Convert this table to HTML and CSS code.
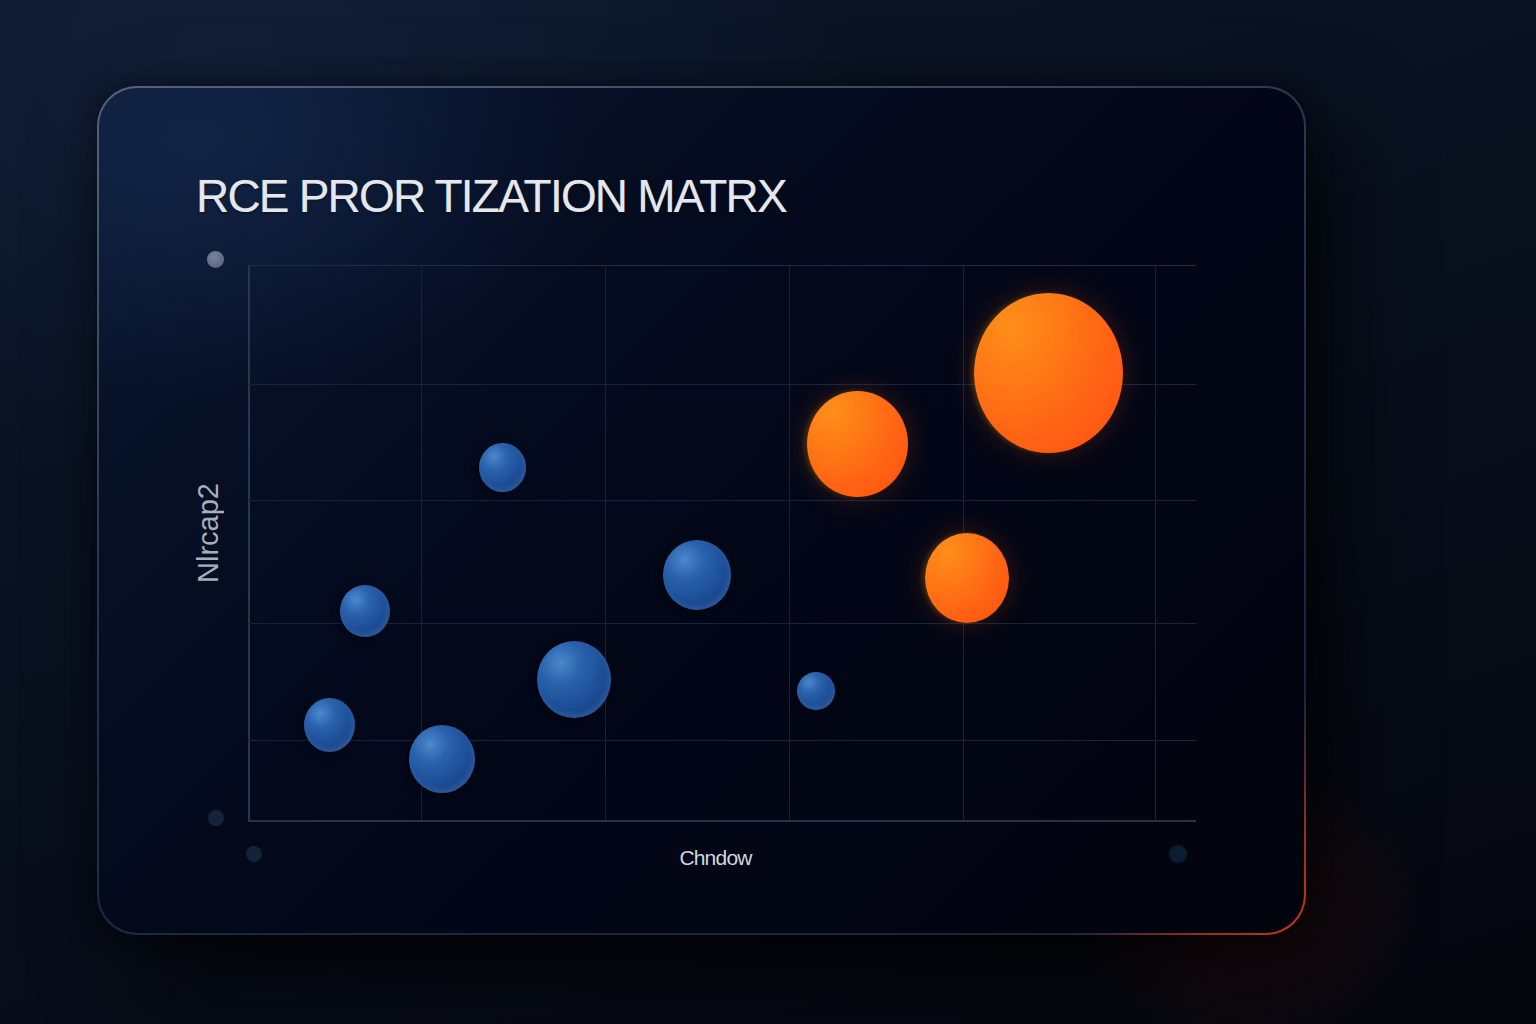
FILE: index.html
```html
<!DOCTYPE html>
<html lang="en">
<head>
<meta charset="utf-8">
<title>RCE Prioritization Matrix</title>
<link rel="stylesheet" href="styles.css">
</head>
<body>
<main class="stage">
  <section class="card">
    <h1 class="title">RCE PROR TIZATION MATRX</h1>
    <div class="chart">
      <div class="y-axis">
        <span class="dot dot-light"></span>
        <span class="y-label">Nlrcap2</span>
        <span class="dot dot-dark"></span>
      </div>
      <div class="plot">
        <svg class="grid" width="948" height="557" viewBox="0 0 948 557" aria-hidden="true">
          <g stroke="#17233a" stroke-width="1">
            <line x1="0" y1="119.5" x2="948" y2="119.5"/>
            <line x1="0" y1="235.5" x2="948" y2="235.5"/>
            <line x1="0" y1="358.5" x2="948" y2="358.5"/>
            <line x1="0" y1="475.5" x2="948" y2="475.5"/>
            <line x1="173.5" y1="0" x2="173.5" y2="555"/>
            <line x1="357.5" y1="0" x2="357.5" y2="555"/>
            <line x1="541.5" y1="0" x2="541.5" y2="555"/>
            <line x1="715.5" y1="0" x2="715.5" y2="555"/>
            <line x1="907.5" y1="0" x2="907.5" y2="555"/>
          </g>
        </svg>
        <span class="bubble blue" style="left:229px;top:177px;width:47px;height:49px"></span>
        <span class="bubble blue" style="left:413px;top:274px;width:68px;height:70px"></span>
        <span class="bubble blue" style="left:90px;top:319px;width:50px;height:52px"></span>
        <span class="bubble blue" style="left:287px;top:375px;width:74px;height:77px"></span>
        <span class="bubble blue" style="left:54px;top:432px;width:51px;height:54px"></span>
        <span class="bubble blue" style="left:159px;top:459px;width:66px;height:68px"></span>
        <span class="bubble blue" style="left:547px;top:406px;width:38px;height:38px"></span>
        <span class="bubble orange" style="left:557px;top:125px;width:101px;height:106px"></span>
        <span class="bubble orange" style="left:724px;top:27px;width:149px;height:160px"></span>
        <span class="bubble orange" style="left:675px;top:267px;width:84px;height:90px"></span>
      </div>
      <div class="corner"></div>
      <div class="x-axis">
        <span class="dot dot-dark dot-left"></span>
        <span class="x-label">Chndow</span>
        <span class="dot dot-dark dot-right"></span>
      </div>
    </div>
  </section>
</main>
</body>
</html>
```
FILE: styles.css
```css
* { box-sizing: border-box; }

html, body {
  margin: 0;
  padding: 0;
  width: 1536px;
  height: 1024px;
  overflow: hidden;
}

body {
  font-family: "Liberation Sans", Arial, sans-serif;
  background:
    radial-gradient(ellipse 900px 600px at 15% 5%, rgba(18, 32, 58, 0.8), rgba(12, 22, 40, 0) 70%),
    linear-gradient(160deg, #0c1729 0%, #08101e 45%, #04060d 100%);
}

.stage {
  padding: 86px 0 0 97px;
}

.card {
  position: relative;
  width: 1209px;
  height: 849px;
  border-radius: 40px;
  border: 2px solid transparent;
  padding: 80px 0 0 97px;
  background:
    radial-gradient(ellipse 560px 380px at 8% 6%, rgba(24, 46, 88, 0.6), rgba(20, 38, 74, 0) 70%) padding-box,
    linear-gradient(135deg, #0a1830 0%, #040b1e 35%, #020616 60%, #02040d 100%) padding-box,
    radial-gradient(circle 300px at 100% 100%, #c8341c 0%, rgba(190, 48, 28, 0.75) 35%, rgba(34, 46, 70, 0) 80%) border-box,
    linear-gradient(160deg, #56647e 0%, #2a3852 35%, #1c2840 70%, #18233a 100%) border-box;
  box-shadow: 30px 40px 90px rgba(0, 0, 0, 0.7), 0 0 24px rgba(0, 0, 0, 0.4);
}

.card::after {
  content: "";
  position: absolute;
  right: -120px;
  bottom: -120px;
  width: 360px;
  height: 300px;
  background: radial-gradient(ellipse closest-side at 50% 50%, rgba(200, 40, 20, 0.16), rgba(200, 40, 20, 0));
  pointer-events: none;
  z-index: -1;
}

.title {
  margin: 0;
  font-size: 46px;
  line-height: 56px;
  font-weight: 400;
  letter-spacing: -1.8px;
  color: #e4e8ee;
  text-shadow: 0 1px 2px rgba(0, 0, 0, 0.6), 0 0 1px rgba(255, 255, 255, 0.4);
  white-space: nowrap;
}

.chart {
  margin-top: 41px;
  margin-left: 3px;
  display: grid;
  grid-template-columns: 49px 948px;
  grid-template-rows: 557px 64px;
}

.y-axis {
  display: flex;
  flex-direction: column;
  justify-content: space-between;
  align-items: center;
  padding-right: 16px;
  margin-top: -14px;
  margin-bottom: -4px;
}

.dot {
  display: block;
  width: 17px;
  height: 17px;
  border-radius: 50%;
  flex: none;
}

.dot-light {
  background: radial-gradient(circle at 40% 35%, #75839a, #55627a);
}

.dot-dark {
  width: 16px;
  height: 16px;
  background: #152238;
}

.y-label {
  writing-mode: vertical-rl;
  transform: rotate(180deg);
  font-size: 29px;
  line-height: 26px;
  letter-spacing: 0;
  color: #a6aebb;
  margin-right: 16px;
  margin-top: -12px;
}

.plot {
  position: relative;
  border-left: 2px solid #28374f;
  border-bottom: 2px solid #24324a;
  border-top: 1px solid #1f2c45;
}

.grid {
  position: absolute;
  left: -2px;
  top: -1px;
  display: block;
}

.bubble {
  position: absolute;
  border-radius: 50%;
  display: block;
}

.blue {
  background: radial-gradient(circle at 32% 28%, #4c88cc 0%, #2a62ac 28%, #1d4f98 58%, #173f82 85%, #24508f 100%);
  box-shadow: inset -2px -3px 5px rgba(100, 140, 200, 0.3), -2px 2px 6px rgba(0, 0, 0, 0.5);
}

.orange {
  background: radial-gradient(ellipse at 25% 20%, #ff8e1a 0%, #ff7a16 30%, #ff6314 62%, #ff5010 100%);
  box-shadow: -3px 0 4px rgba(110, 80, 0, 0.45), 0 0 30px rgba(255, 90, 20, 0.22);
}

.corner { }

.x-axis {
  display: flex;
  align-items: center;
}

.dot-left {
  margin-left: -2px;
}

.dot-right {
  width: 18px;
  height: 18px;
  margin-right: 9px;
  background: #0d1d31;
}

.x-label {
  flex: 1;
  text-align: center;
  font-size: 21px;
  letter-spacing: -0.8px;
  color: #d2d7de;
  padding-top: 8px;
}
```
